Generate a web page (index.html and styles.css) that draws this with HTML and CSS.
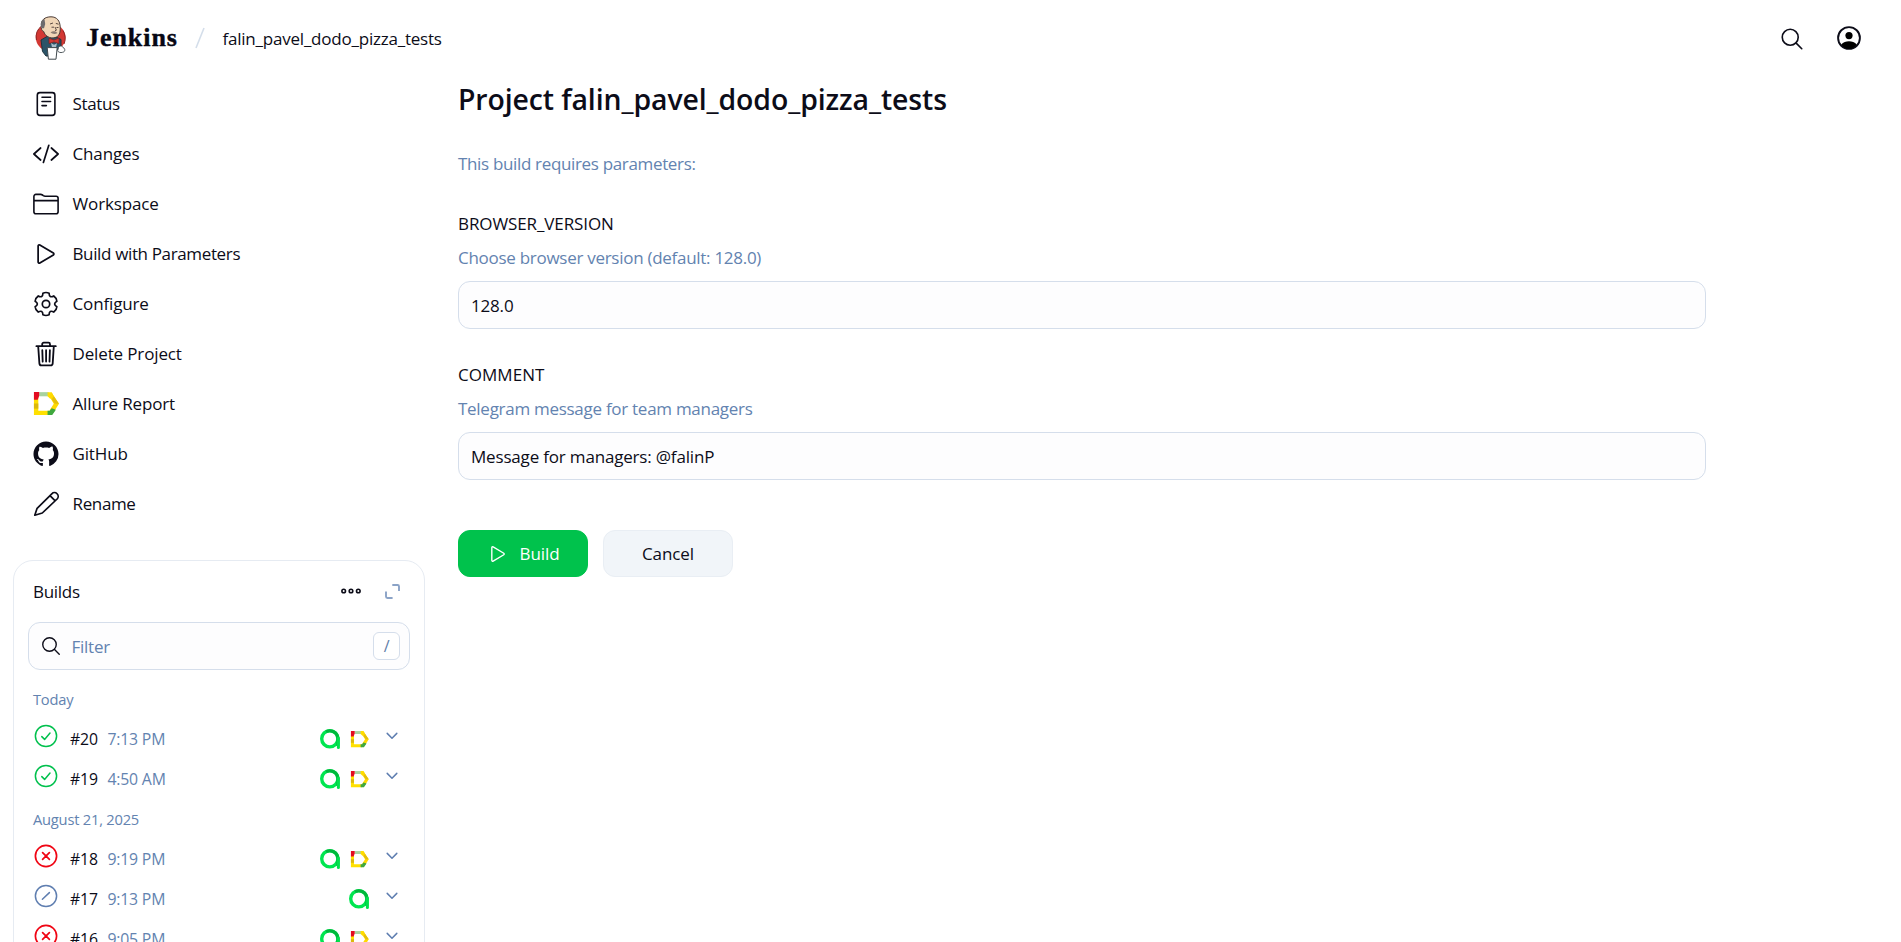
FILE: index.html
```html
<!DOCTYPE html>
<html lang="en">
<head>
<meta charset="utf-8">
<title>falin_pavel_dodo_pizza_tests - Jenkins</title>
<link rel="stylesheet" href="styles.css">
</head>
<body>
<svg class="defs" width="0" height="0" aria-hidden="true">
  <symbol id="play" viewBox="0 0 512 512"><path d="M112 111v290c0 17.44 17 28.52 31 20.16l247.9-148.37c12.12-7.25 12.12-26.33 0-33.58L143 90.84c-14-8.36-31 2.72-31 20.16z" fill="none" stroke="currentColor" stroke-miterlimit="10" stroke-width="32"/></symbol>
  <symbol id="search" viewBox="0 0 512 512"><path d="M221.09 64a157.09 157.09 0 10157.09 157.09A157.1 157.1 0 00221.09 64z" fill="none" stroke="currentColor" stroke-width="32"/><path d="M338.29 338.29L448 448" fill="none" stroke="currentColor" stroke-linecap="round" stroke-width="32"/></symbol>
  <symbol id="allure" viewBox="0 0 25 23"><path d="M3 5V20M3 20H14" fill="none" stroke="#ffe000" stroke-width="4.2" stroke-linecap="square"/><path d="M3 11V16" stroke="#dcb80c" stroke-width="4.2"/><path d="M6 2.1H15" stroke="#a8d29f" stroke-width="4"/><path d="M14 .1H18L20.5 5 16.5 6.5 14 4.1z" fill="#ffe000"/><path d="M18 .8L25 11.3 19.5 20 16 17.5 20 11.3 15.6 4z" fill="#ffd900"/><path d="M20 4L25 11.3 21 11.3 18 7z" fill="#e4bf0b"/><path d="M14 18H16L18 15.5 22 17 18.5 22.1H14z" fill="#3fa83f"/><path d="M.9 0H6V3.5L4.5 7.5H.9z" fill="#e30b20"/></symbol>
  <symbol id="testops" viewBox="0 0 20 20"><circle cx="9.8" cy="9.8" r="8.1" fill="none" stroke="#00e650" stroke-width="3.4"/><path d="M6 2.7A8.1 8.1 0 0117.9 9.8V17" fill="none" stroke="#00b83c" stroke-width="3"/><path d="M18.4 9V18.4" stroke="#00e04c" stroke-width="3" stroke-linecap="round"/></symbol>
  <symbol id="ok" viewBox="0 0 24 24"><g fill="none" stroke="currentColor" stroke-width="1.5" stroke-linecap="round" stroke-linejoin="round"><circle cx="12" cy="12" r="10.6"/><path d="M7.8 12.6L10.6 15.4 16 9"/></g></symbol>
  <symbol id="fail" viewBox="0 0 24 24"><g fill="none" stroke="currentColor" stroke-width="1.7" stroke-linecap="round"><circle cx="12" cy="12" r="10.6"/><path d="M8.6 8.6l6.8 6.8M15.4 8.6l-6.8 6.8"/></g></symbol>
  <symbol id="aborted" viewBox="0 0 24 24"><g fill="none" stroke="currentColor" stroke-width="1.5" stroke-linecap="round"><circle cx="12" cy="12" r="10.6"/><path d="M8.4 15.2l7-6.6"/></g></symbol>
  <symbol id="chev" viewBox="0 0 12 8"><path d="M1.2 1.4L6 6.2 10.8 1.4" fill="none" stroke="currentColor" stroke-width="1.5" stroke-linecap="round" stroke-linejoin="round"/></symbol>
</svg>

<header class="header">
  <a class="brand">
    <svg class="butler" viewBox="0 0 32 44">
      <ellipse cx="15.6" cy="21.5" rx="14.8" ry="14" fill="#d33833"/>
      <path d="M1.4 24A14.4 14.6 0 017 9.6M28 14.6A15 15 0 0129 28" fill="none" stroke="#8f2423" stroke-width="1"/>
      <path d="M6 24L12 20.5H20L26 23.5 26 32 21 34 20 40H11L7.5 35.5z" fill="#2b5468" stroke="#20343f" stroke-width="1"/>
      <path d="M6.4 10C5.5 4 10 .8 16 .8C22 .8 25 5 25.2 11C25.5 17 24 20.5 20 21.6C15 23 10 20 8.7 15.5C6.8 15 5.6 12 6.4 10z" fill="#f0d6b7" stroke="#4a3b35" stroke-width="1"/>
      <path d="M9.5 3C5.4 4.5 5 9.5 7 12.2L9 12.2 10.2 8z" fill="#6d6b6d"/>
      <path d="M15 8l3-1M20.8 7.4l2.8.8M16.5 11.2h2.5M21.5 11.5h2M20 11l1.4 3.2-1.4.6" fill="none" stroke="#4a3b35" stroke-width=".9"/>
      <path d="M15.5 16.6c2-1.8 5-1.8 7 .4-2 1.3-5 1.2-7-.4z" fill="#8b7d72"/>
      <path d="M14 22.3l5 1.8 5-2v5.4l-5-1.6-5 1.6z" fill="#d33833" stroke="#7d211f" stroke-width=".7"/>
      <path d="M16 27l3 1.8 3-1.6-1 4h-4z" fill="#a9bdc9"/>
      <path d="M12.2 31.6h10l-1.2 11.6h-7.6z" fill="#fff" stroke="#40494e" stroke-width="1"/>
      <path d="M23.5 31.5c1-2 4-2 4.5 0 2.6 1 2.3 4.5-.4 4.8-2 .8-4.6-.2-5-1.5z" fill="#fff" stroke="#40494e" stroke-width=".9"/>
    </svg>
    <span class="wordmark">Jenkins</span>
  </a>
  <svg class="slash" viewBox="0 0 10 22"><path d="M9 1L1 21" stroke="#d4deea" stroke-width="1.6"/></svg>
  <a class="crumb">falin_pavel_dodo_pizza_tests</a>
  <div class="header-actions">
    <svg class="hsearch"><use href="#search"/></svg>
    <svg class="huser" viewBox="0 0 24 24"><circle cx="12" cy="12" r="10.9" fill="none" stroke="currentColor" stroke-width="1.9"/><circle cx="12" cy="9.6" r="3.6"/><path d="M4.2 18.8C6.2 16 9 15.2 12 15.2S17.8 16 19.8 18.8C17.8 21.4 15 23 12 23S6.2 21.4 4.2 18.8z"/></svg>
  </div>
</header>

<div class="page">
  <aside class="side">
    <nav class="tasks">
      <a class="task"><svg class="icon" viewBox="0 0 26 26"><g fill="none" stroke="currentColor" stroke-width="1.6" stroke-linecap="round" stroke-linejoin="round"><rect x="4.3" y="1.6" width="17.6" height="22.8" rx="2.6"/><path d="M9 6.3h8.6M9 10.5h8.6M9 14.6h4.4"/></g></svg><span class="tight">Status</span></a>
      <a class="task"><svg class="icon" viewBox="0 0 26 26"><path d="M7.6 7L.9 13l6.7 6M18.4 7l6.7 6-6.7 6M15.8 4.3L10.4 21.4" fill="none" stroke="currentColor" stroke-width="1.7" stroke-linecap="round" stroke-linejoin="round"/></svg><span>Changes</span></a>
      <a class="task"><svg class="icon" viewBox="0 0 26 26"><path d="M.9 9.8V5.4a2 2 0 012-2H7.6c.8 0 1.3.2 1.9.6l.8.6c.6.4 1.1.6 1.9.6h10.9a2 2 0 012 2V20.8a2 2 0 01-2 2H2.9a2 2 0 01-2-2V9.6h24.2" fill="none" stroke="currentColor" stroke-width="1.6" stroke-linejoin="round"/></svg><span>Workspace</span></a>
      <a class="task"><svg class="icon big"><use href="#play"/></svg><span class="tight">Build with Parameters</span></a>
      <a class="task"><svg class="icon" viewBox="-13 -13 26 26"><g fill="none" stroke="currentColor" stroke-width="1.7" stroke-linejoin="round"><circle r="3.7"/><path d="M3.09-10.77Q3.2-5.54 7.78-8.06Q10.57-6.1 10.87-2.71Q6.4 0 10.87 2.71Q10.57 6.1 7.78 8.06Q3.2 5.54 3.09 10.77Q0 12.2-3.09 10.77Q-3.2 5.54-7.78 8.06Q-10.57 6.1-10.87 2.71Q-6.4 0-10.87-2.71Q-10.57-6.1-7.78-8.06Q-3.2-5.54-3.09-10.77Q0-12.2 3.09-10.77z"/></g></svg><span>Configure</span></a>
      <a class="task"><svg class="icon" viewBox="0 0 26 26"><g fill="none" stroke="currentColor" stroke-width="1.8" stroke-linecap="round" stroke-linejoin="round"><path d="M5.2 5.4l1.2 17c.1 1.2.9 2 2 2h9.3c1.1 0 1.9-.8 2-2l1.1-17M3.4 5.2h19.4M9.2 5V3.2c0-.9.7-1.5 1.5-1.5h4.8c.8 0 1.5.6 1.5 1.5V5M13.1 9.2v11.4M9.3 9.2l.4 11.4M16.9 9.2l-.4 11.4"/></g></svg><span>Delete Project</span></a>
      <a class="task"><svg class="icon allure"><use href="#allure"/></svg><span>Allure Report</span></a>
      <a class="task"><svg class="icon gh" viewBox="-.3 -.3 16.6 16.6"><path fill="currentColor" d="M8 0C3.58 0 0 3.58 0 8c0 3.54 2.29 6.53 5.47 7.59.4.07.55-.17.55-.38 0-.19-.01-.82-.01-1.49-2.01.37-2.53-.49-2.69-.94-.09-.23-.48-.94-.82-1.13-.28-.15-.68-.52-.01-.53.63-.01 1.08.58 1.23.82.72 1.21 1.87.87 2.33.66.07-.52.28-.87.51-1.07-1.78-.2-3.64-.89-3.64-3.95 0-.87.31-1.59.82-2.15-.08-.2-.36-1.02.08-2.12 0 0 .67-.21 2.2.82.64-.18 1.32-.27 2-.27s1.36.09 2 .27c1.53-1.04 2.2-.82 2.2-.82.44 1.1.16 1.92.08 2.12.51.56.82 1.27.82 2.15 0 3.07-1.87 3.75-3.65 3.95.29.25.54.73.54 1.48 0 1.07-.01 1.93-.01 2.2 0 .21.15.46.55.38A8.01 8.01 0 0016 8c0-4.42-3.58-8-8-8z"/></svg><span>GitHub</span></a>
      <a class="task"><svg class="icon" viewBox="0 0 26 26"><path d="M1.8 24.2L4.1 17.3 18.8 2.8a3.7 3.7 0 015.3 5.2L9.3 22zM17 4.7l5.2 5.2" fill="none" stroke="currentColor" stroke-width="1.7" stroke-linejoin="round"/></svg><span class="tight">Rename</span></a>
    </nav>

    <section class="card">
      <div class="card-head">
        <h2 class="card-title">Builds</h2>
        <svg class="dots" viewBox="0 0 20 6"><g fill="none" stroke="currentColor" stroke-width="1.6"><circle cx="2.7" cy="3" r="1.8"/><circle cx="10" cy="3" r="1.8"/><circle cx="17.3" cy="3" r="1.8"/></g></svg>
        <svg class="expand" viewBox="0 0 15 15"><path d="M7.3 1H12.6Q14 1 14 2.4V7M1 7.6V12.6Q1 14 2.4 14H7.6" fill="none" stroke="currentColor" stroke-width="1.9"/></svg>
      </div>
      <div class="filter"><svg class="fsearch"><use href="#search"/></svg><span class="ph">Filter</span><kbd class="key">/</kbd></div>
      <div class="builds">
        <h3 class="day">Today</h3>
        <div class="build"><svg class="st green"><use href="#ok"/></svg><span class="num">#20</span><span class="time">7:13 PM</span><span class="badges"><svg class="to"><use href="#testops"/></svg><svg class="al"><use href="#allure"/></svg></span><svg class="chev"><use href="#chev"/></svg></div>
        <div class="build"><svg class="st green"><use href="#ok"/></svg><span class="num">#19</span><span class="time">4:50 AM</span><span class="badges"><svg class="to"><use href="#testops"/></svg><svg class="al"><use href="#allure"/></svg></span><svg class="chev"><use href="#chev"/></svg></div>
        <h3 class="day">August 21, 2025</h3>
        <div class="build"><svg class="st red"><use href="#fail"/></svg><span class="num">#18</span><span class="time">9:19 PM</span><span class="badges"><svg class="to"><use href="#testops"/></svg><svg class="al"><use href="#allure"/></svg></span><svg class="chev"><use href="#chev"/></svg></div>
        <div class="build"><svg class="st blue"><use href="#aborted"/></svg><span class="num">#17</span><span class="time">9:13 PM</span><span class="badges"><svg class="to"><use href="#testops"/></svg></span><svg class="chev"><use href="#chev"/></svg></div>
        <div class="build"><svg class="st red"><use href="#fail"/></svg><span class="num">#16</span><span class="time">9:05 PM</span><span class="badges"><svg class="to"><use href="#testops"/></svg><svg class="al"><use href="#allure"/></svg></span><svg class="chev"><use href="#chev"/></svg></div>
      </div>
    </section>
  </aside>

  <main class="main">
    <h1 class="title">Project falin_pavel_dodo_pizza_tests</h1>
    <p class="lead">This build requires parameters:</p>
    <div class="field">
      <div class="label">BROWSER_VERSION</div>
      <div class="help">Choose browser version (default: 128.0)</div>
      <div class="input">128.0</div>
    </div>
    <div class="field">
      <div class="label wide">COMMENT</div>
      <div class="help">Telegram message for team managers</div>
      <div class="input">Message for managers: @falinP</div>
    </div>
    <div class="actions">
      <button class="btn primary"><svg class="bplay"><use href="#play"/></svg><span>Build</span></button>
      <button class="btn">Cancel</button>
    </div>
  </main>
</div>
</body>
</html>
```
FILE: styles.css
```css
*{box-sizing:border-box}
html,body{height:100%}
body{margin:0;background:#fff;color:#0c0c18;font:400 17px/24px "Open Sans","Noto Sans",sans-serif;letter-spacing:-.14px;overflow:hidden;display:flex;flex-direction:column}
.defs{position:absolute}
svg{display:block;flex:none}
h1,h2,h3,p{margin:0;font-weight:400}

.header{height:76px;flex:none;display:flex;align-items:center;padding:0 40px 0 35px}
.brand{display:flex;align-items:center;gap:19px}
.butler{width:32px;height:44px}
.wordmark{width:92px;font:700 26px/30px "Liberation Serif",serif;letter-spacing:.95px;color:#070714;-webkit-text-stroke:.4px #070714;white-space:nowrap}
.slash{width:10px;height:22px;margin:0 17.5px 0 17px}
.crumb{letter-spacing:-.22px;padding-top:2px}
.header-actions{margin-left:auto;display:flex;align-items:center;gap:32px}
.hsearch{width:26px;height:26px;margin-top:1px}
.huser{width:24px;height:24px}

.page{flex:1;min-height:0;display:flex;overflow:hidden}
.side{width:425px;flex:none;padding:3px 0 0 13px}
.task{height:50px;display:flex;align-items:center;gap:13.5px;padding-left:20px}
.task .tight{letter-spacing:-.36px}
.icon{width:26px;height:26px}
.icon.big{width:28px;height:28px;margin:0 -1px}
.icon.allure{height:24px}

.card{margin-top:31px;height:420px;border:1px solid #e6ebf2;border-radius:20px;padding:0 14px}
.card-head{height:61px;display:flex;align-items:center;padding:0 10px 1px 5px}
.card-title{flex:1;font-size:17px;letter-spacing:-.3px;padding-top:1px}
.dots{width:20px;height:6px;margin-right:24px}
.expand{width:15px;height:15px;color:#8ba3c7}
.filter{height:48px;border:1px solid #d5deeb;border-radius:12px;background:#fdfdfe;display:flex;align-items:center;padding:0 9px 0 11px}
.fsearch{width:22px;height:22px}
.ph{color:#6383b0;margin-left:9.5px;padding-top:1px;letter-spacing:-.25px}
.key{margin-left:auto;width:27px;height:28px;border:1px solid #d5deeb;border-radius:6px;font:500 16px/26px "Open Sans",sans-serif;text-align:center;color:#5f7ea9;background:#fff}
.builds{margin-top:8px}
.day{height:40px;padding:1px 5px 0;font-size:14.7px;line-height:40px;letter-spacing:-.22px;color:#6383b0}
.build{height:40px;display:flex;align-items:center;padding:0 12.5px 0 5.5px;font-size:15.8px}
.st{width:24px;height:24px;margin-top:-5px}
.green{color:#00c04d}
.red{color:#f00514}
.blue{color:#5f7eb0}
.num{margin-left:12.5px;width:27px}
.time{margin-left:10.5px;color:#6383b0;letter-spacing:-.2px}
.num,.time{padding-top:1px}
.badges{margin:2px 0 0 auto;display:flex;align-items:center;gap:10px}
.to{width:20px;height:20px}
.al{width:19px;height:17px}
.chev{width:12px;height:8px;margin:-4px 0 0 17px;color:#5f7eb0}

.main{width:1248px;margin-left:33px;padding-top:3px}
.title{font-size:28.4px;line-height:40px;font-weight:600;letter-spacing:-.09px}
.lead{margin-top:33px;letter-spacing:-.34px;color:#6383b0}
.field{margin-top:34.5px}
.lead + .field{margin-top:36px}
.label{letter-spacing:-.1px}
.label.wide{letter-spacing:.05px}
.help{margin-top:10px;letter-spacing:-.28px;color:#6383b0}
.input{margin-top:11px;height:47.5px;border:1px solid #d5deeb;border-radius:12px;background:#fdfdfe;padding:11.5px 12px;letter-spacing:-.18px}
.actions{display:flex;gap:15px;margin-top:50.5px}
.btn{width:130px;height:47px;border:1px solid #e9eef4;border-radius:12px;background:#f1f5f9;font:inherit;letter-spacing:-.1px;color:inherit;display:flex;align-items:center;justify-content:center;gap:11px;padding:0}
.primary{background:#00c24c;border-color:#00c24c;color:#fff}
.primary span{padding-top:1px}
.bplay{width:22px;height:22px}
```
